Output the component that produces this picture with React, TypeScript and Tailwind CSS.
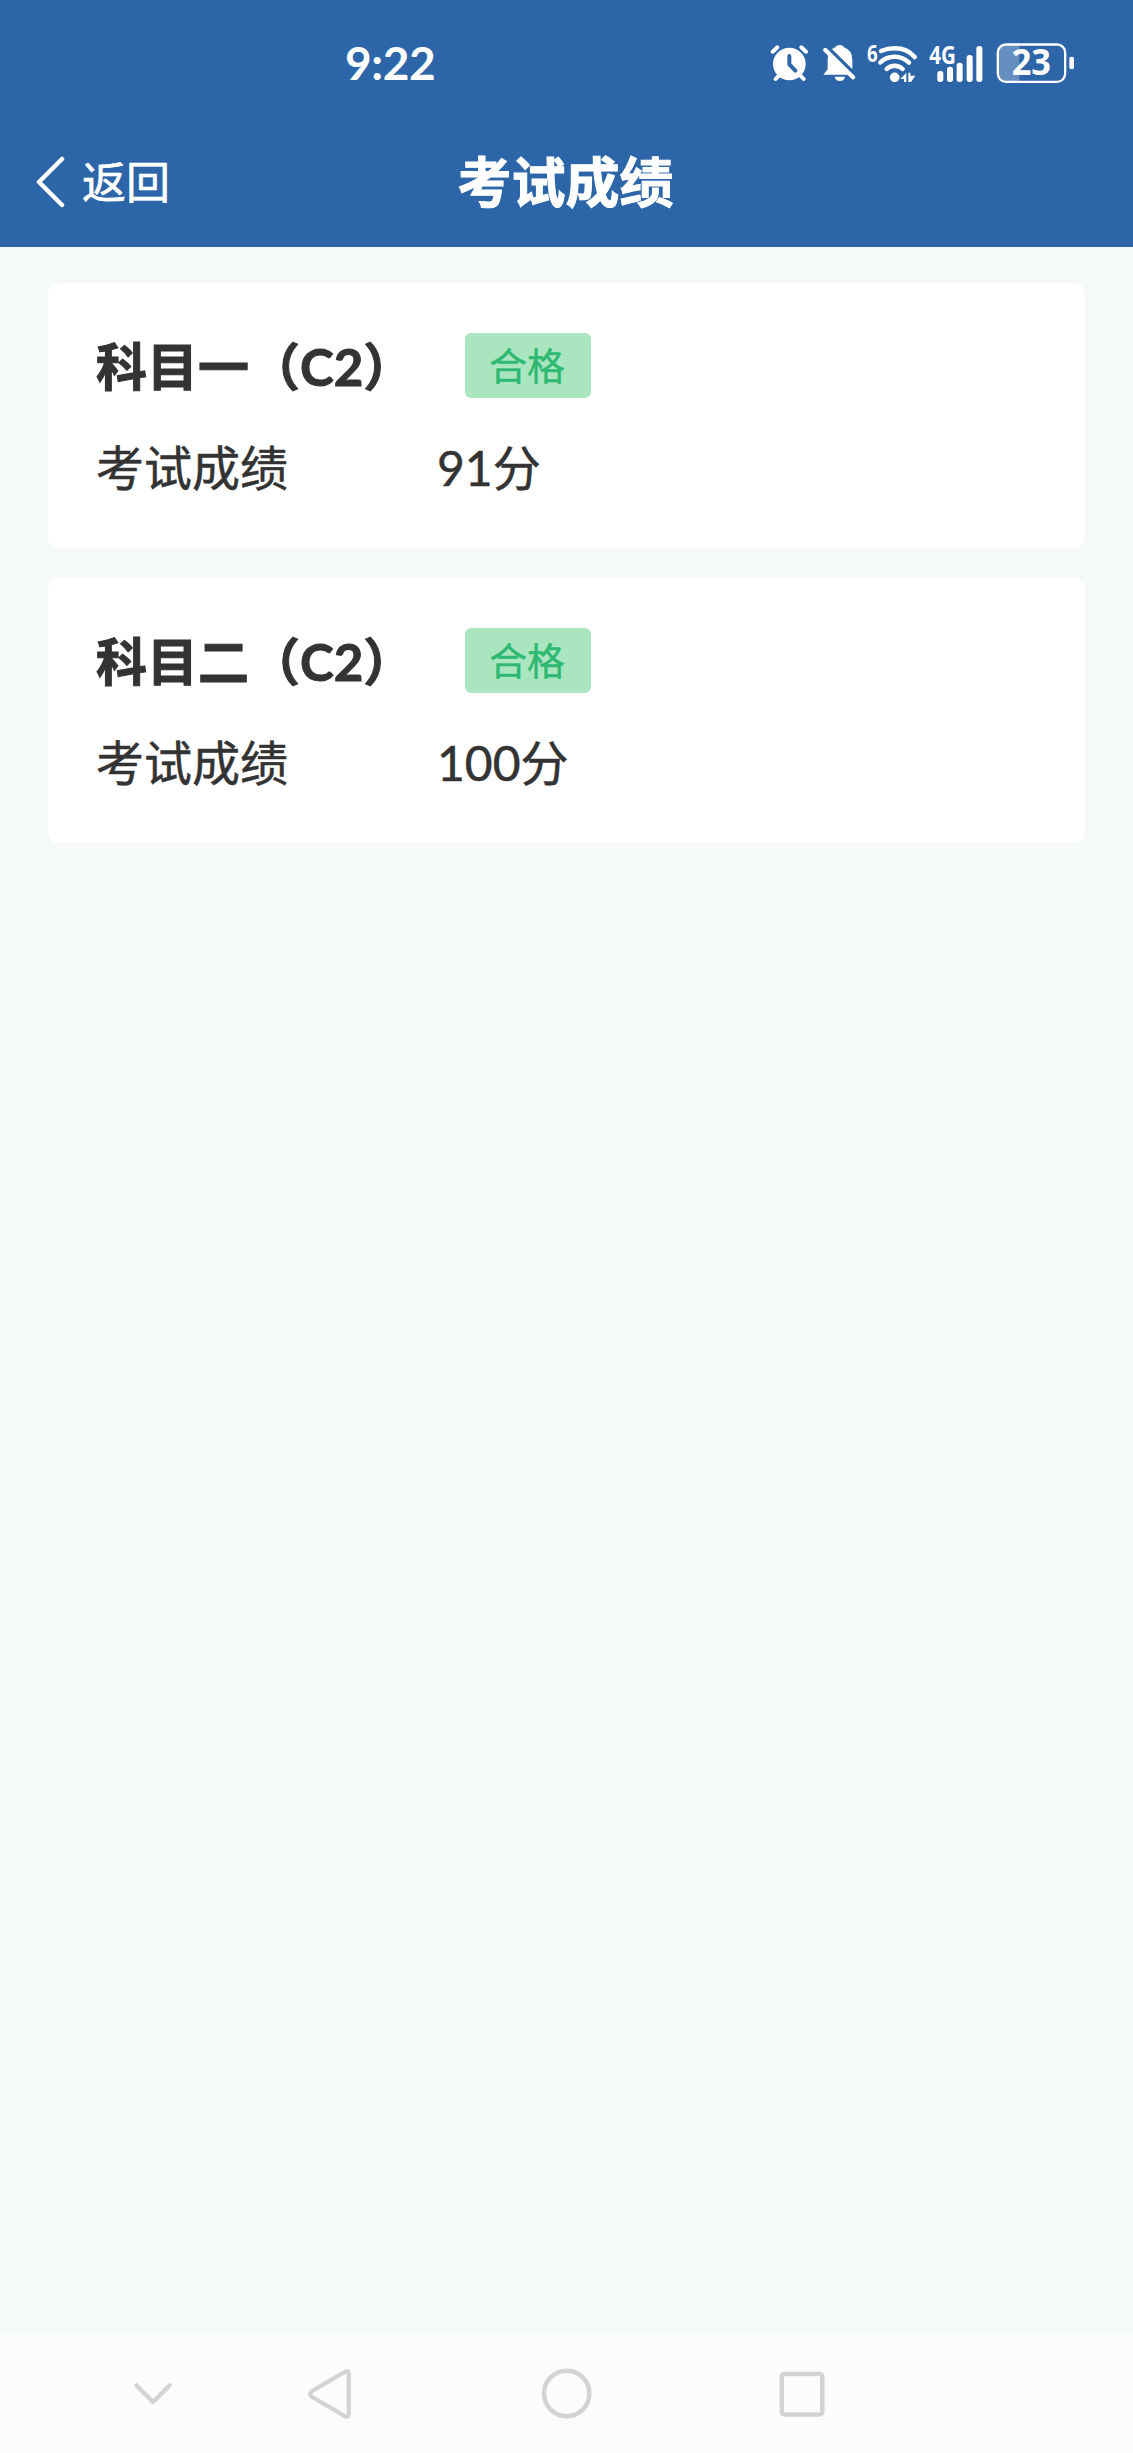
type Result = {
  subject: string;
  status: string;
  score: string;
};

const results: Result[] = [
  { subject: "科目一（C2）", status: "合格", score: "91分" },
  { subject: "科目二（C2）", status: "合格", score: "100分" },
];

function AlarmIcon() {
  return (
    <svg width="40" height="38" viewBox="30 39 120 114" fill="none">
      <circle cx="88" cy="99" r="49" fill="#fff" />
      <path
        d="M38 62 52 49M124 49l14 13M60 130 47 144M118 130l13 14"
        stroke="#fff"
        strokeWidth="12"
        strokeLinecap="round"
      />
      <path
        d="M88 75v25l18 19"
        stroke="#2c65a8"
        strokeWidth="12"
        strokeLinecap="round"
        strokeLinejoin="round"
      />
    </svg>
  );
}

function MutedBellIcon() {
  return (
    <svg width="33" height="38" viewBox="189 39 99 114" fill="none">
      <path
        d="M190 131 203 115V85Q203 57 226 49 229 42 239 42 249 42 252 49 277 58 277 86V115L265 131Z"
        fill="#fff"
      />
      <path d="M224 137h31q-3 13-15.500 13t-15.500-13Z" fill="#fff" />
      <path d="M193 40 290 136" stroke="#2c65a8" strokeWidth="12" />
      <path d="M196 57 279 139" stroke="#fff" strokeWidth="13" strokeLinecap="round" />
    </svg>
  );
}

function WifiIcon() {
  return (
    <svg className="overflow-visible" width="51" height="40" viewBox="320 33 153 120" fill="none">
      <text
        x="320"
        y="89"
        fontSize="70"
        fontWeight="700"
        fill="#fff"
        textLength="32"
        lengthAdjust="spacingAndGlyphs"
        className="font-['Noto_Sans']"
      >
        6
      </text>
      <g stroke="#fff" strokeWidth="13.500" strokeLinecap="round">
        <path d="M362 57Q381 49 404 49 440 49 463 75" />
        <path d="M360 91Q378 74 403 74 428 74 446 92" />
        <path d="M379 111Q389 101 403 101 417 101 427 111" />
      </g>
      <circle cx="403" cy="136" r="14.500" fill="#fff" />
      <path d="M438 122v28h-7v-9h-11ZM444 122h6v9h15l-13 19h-8Z" fill="#fff" />
    </svg>
  );
}

function SignalIcon() {
  return (
    <svg className="overflow-visible" width="55" height="40" viewBox="25 33 165 120" fill="#fff">
      <text
        x="26"
        y="95"
        fontSize="74"
        fontWeight="700"
        textLength="80"
        lengthAdjust="spacingAndGlyphs"
        className="font-['Noto_Sans']"
      >
        4G
      </text>
      <rect x="50" y="117" width="18" height="33" rx="8" />
      <rect x="79" y="104" width="18" height="46" rx="8" />
      <rect x="108" y="92" width="18" height="58" rx="8" />
      <rect x="138" y="69" width="18" height="81" rx="8" />
      <rect x="167" y="42" width="18" height="108" rx="8" />
    </svg>
  );
}

function BatteryIcon() {
  return (
    <svg className="overflow-visible" width="79" height="40" viewBox="227 36 237 120" fill="none">
      <path d="M297 41H256a23 23 0 0 0-23 23v65a23 23 0 0 0 23 23H297Z" fill="#fff" fillOpacity=".28" />
      <rect x="232.500" y="40.500" width="202" height="112" rx="24" stroke="#fff" strokeWidth="7" />
      <rect x="447" y="77" width="14" height="38" rx="6" fill="#fff" />
      <text
        x="274"
        y="133"
        fontSize="105"
        fontWeight="700"
        fill="#fff"
        textLength="118"
        lengthAdjust="spacingAndGlyphs"
        className="font-['Noto_Sans']"
      >
        23
      </text>
    </svg>
  );
}

function StatusBar() {
  return (
    <div className="flex h-[118px] items-center justify-between pt-2 pr-[58px] pl-[345px]">
      <span className="text-[46px] leading-none font-bold tracking-[-0.4px]">9:22</span>
      <div className="flex items-center">
        <AlarmIcon />
        <div className="ml-[13px]">
          <MutedBellIcon />
        </div>
        <div className="ml-[11px]">
          <WifiIcon />
        </div>
        <div className="ml-[11px]">
          <SignalIcon />
        </div>
        <div className="ml-[12px]">
          <BatteryIcon />
        </div>
      </div>
    </div>
  );
}

function Header() {
  return (
    <header className="bg-[#2c65a8] text-white">
      <StatusBar />
      <div className="grid h-[129px] grid-cols-3 items-center">
        <button className="flex items-center gap-[17px] pb-0.5 pl-[35px]">
          <svg width="30" height="52" viewBox="0 0 30 52" fill="none">
            <path
              d="M27 3 4 26 27 49"
              stroke="#fff"
              strokeWidth="4.500"
              strokeLinecap="round"
              strokeLinejoin="round"
            />
          </svg>
          <span className="text-[44px] leading-none [-webkit-text-stroke:0.6px]">返回</span>
        </button>
        <h1 className="pr-0.5 text-center text-[54px] leading-none font-bold whitespace-nowrap [-webkit-text-stroke:1px]">
          考试成绩
        </h1>
      </div>
    </header>
  );
}

function ResultCard({ subject, status, score }: Result) {
  return (
    <div className="h-[265px] rounded-[11px] bg-white px-12 pt-[50px]">
      <div className="flex h-[65px] items-center">
        <h2 className="w-[369px] pt-0.5 text-[51px] leading-none font-bold whitespace-nowrap [-webkit-text-stroke:1px]">
          {subject}
        </h2>
        <span className="flex h-[65px] w-[126px] items-center justify-center rounded-md bg-[#a9e6c0] pr-0.5 pb-0.5 text-[38px] leading-none text-[#2eb872] [-webkit-text-stroke:0.4px]">
          {status}
        </span>
      </div>
      <div className="mt-[46px] flex items-center text-[48px] leading-none [-webkit-text-stroke:0.5px]">
        <span className="w-[341px]">考试成绩</span>
        <span>{score}</span>
      </div>
    </div>
  );
}

function NavigationBar() {
  return (
    <nav className="flex h-[119px] items-center bg-[#fcfcfc] pl-[132px]">
      <svg width="42" height="26" viewBox="0 0 42 26" fill="none" stroke="#d3d3d3" strokeWidth="4.500">
        <path d="M4.500 4.500 21 21 37.500 4.500" strokeLinecap="round" strokeLinejoin="round" />
      </svg>
      <svg
        className="ml-[132px]"
        width="48"
        height="54"
        viewBox="0 0 48 54"
        fill="none"
        stroke="#d3d3d3"
        strokeWidth="4.200"
      >
        <path d="M39.500 4.500 5.500 24.500Q3 27 5.500 29.500L39.500 49.500Q42.800 50.500 42.800 47V7Q42.800 3.500 39.500 4.500Z" />
      </svg>
      <svg
        className="ml-[187px]"
        width="52"
        height="52"
        viewBox="0 0 52 52"
        fill="none"
        stroke="#d3d3d3"
        strokeWidth="4.500"
      >
        <circle cx="25.700" cy="25.500" r="22.700" />
      </svg>
      <svg
        className="ml-[185px]"
        width="48"
        height="48"
        viewBox="0 0 48 48"
        fill="none"
        stroke="#d3d3d3"
        strokeWidth="4.500"
      >
        <rect x="3.800" y="4" width="40.500" height="40.500" rx="2.500" />
      </svg>
    </nav>
  );
}

export default function App() {
  return (
    <div
      lang="zh-CN"
      className="flex h-[2453px] w-[1133px] flex-col bg-[#f5f9fa] font-[Lato,'Noto_Sans_CJK_SC',sans-serif] text-[#333]"
    >
      <Header />
      <main className="flex flex-1 flex-col gap-[30px] px-12 pt-9">
        {results.map((result) => (
          <ResultCard key={result.subject} {...result} />
        ))}
      </main>
      <NavigationBar />
    </div>
  );
}
